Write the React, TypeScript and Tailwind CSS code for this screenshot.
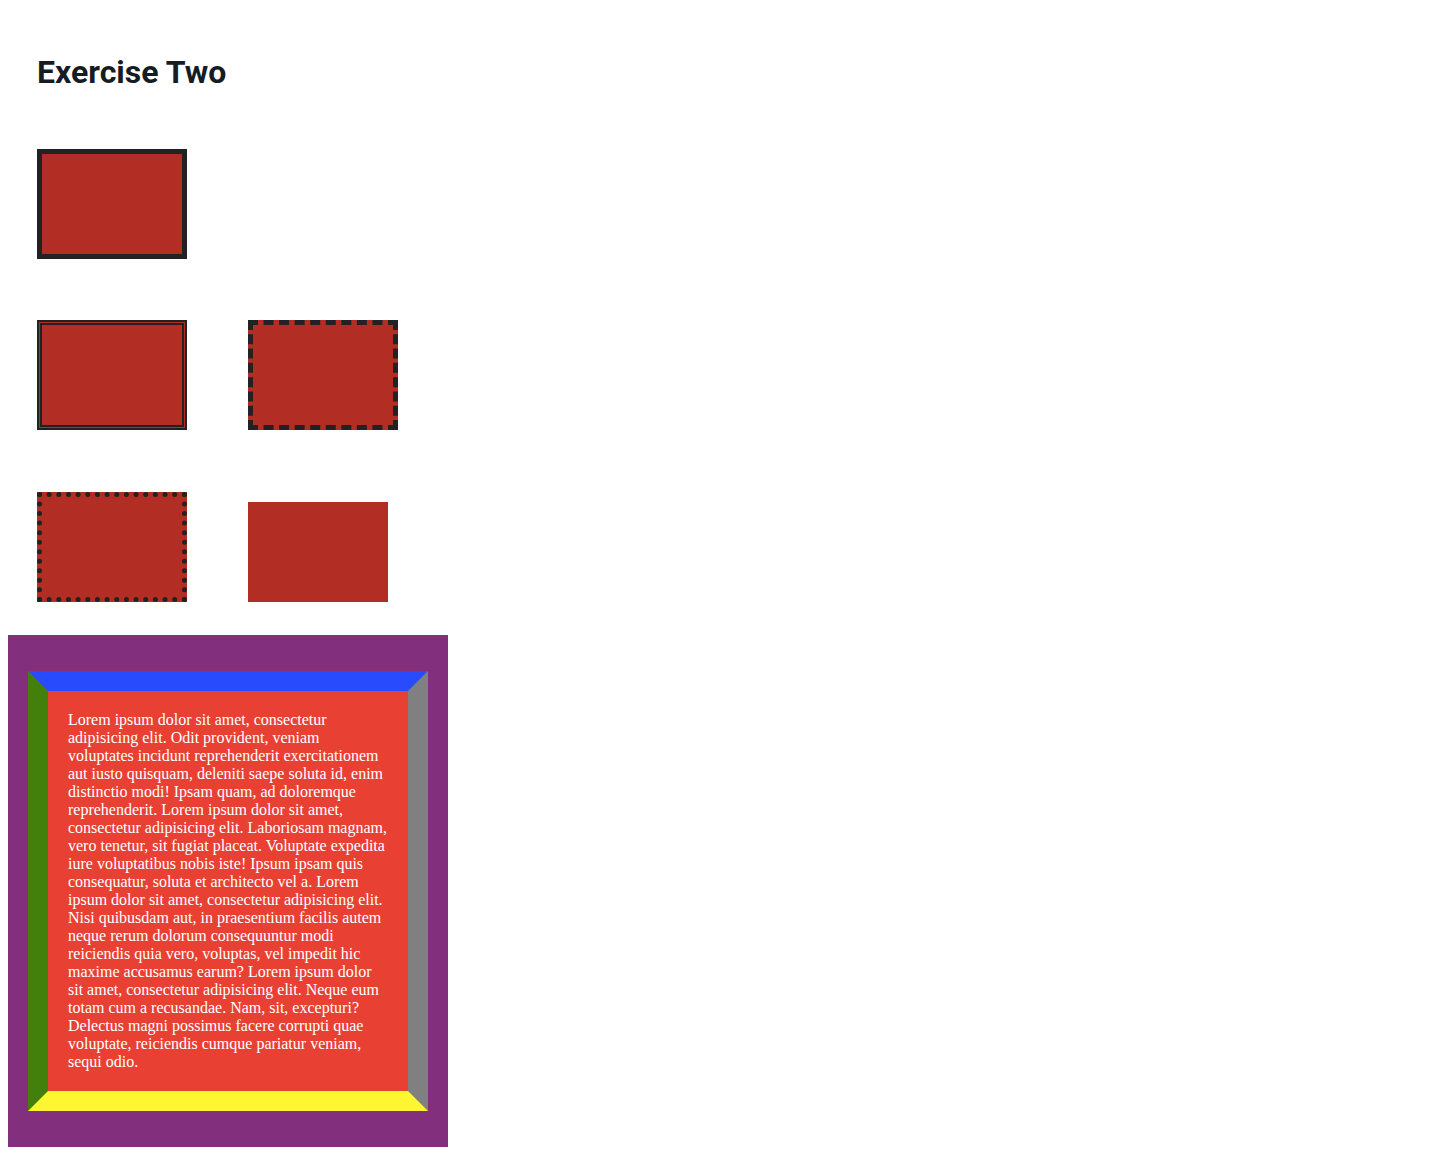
export default function App() {
  const box = "w-[150px] h-[110px] bg-[#b22d24] border-[5px] border-[#222222]";

  return (
    <div className="min-h-screen bg-white">
      <div className="pl-[37px] pt-[56px]">
        <h1 className="font-['Roboto',sans-serif] text-[32px] leading-none font-bold text-[#151c24]">
          Exercise Two
        </h1>

        <div className="mt-[61px] flex flex-col gap-[61px]">
          <div className="flex">
            <div className={`${box} border-solid`} />
          </div>
          <div className="flex gap-[61px]">
            <div className={`${box} border-double`} />
            <div className={`${box} border-dashed`} />
          </div>
          <div className="flex items-end gap-[61px] pt-px">
            <div className={`${box} border-dotted`} />
            <div className="w-[140px] h-[100px] bg-[#b22d24]" />
          </div>
        </div>
      </div>

      <div className="ml-2 mt-[33px] w-[440px] bg-[#822f7e] px-5 py-9">
        <div className="border-[20px] border-solid border-t-[#284bfe] border-r-[#808080] border-b-[#fdf631] border-l-[#427f0b] bg-[#e84033] p-5">
          <p className="font-['Liberation_Serif',serif] text-base leading-[18px] text-white">
            Lorem ipsum dolor sit amet, consectetur adipisicing elit. Odit
            provident, veniam voluptates incidunt reprehenderit exercitationem
            aut iusto quisquam, deleniti saepe soluta id, enim distinctio modi!
            Ipsam quam, ad doloremque reprehenderit. Lorem ipsum dolor sit amet,
            consectetur adipisicing elit. Laboriosam magnam, vero tenetur, sit
            fugiat placeat. Voluptate expedita iure voluptatibus nobis iste!
            Ipsum ipsam quis consequatur, soluta et architecto vel a. Lorem
            ipsum dolor sit amet, consectetur adipisicing elit. Nisi quibusdam
            aut, in praesentium facilis autem neque rerum dolorum consequuntur
            modi reiciendis quia vero, voluptas, vel impedit hic maxime
            accusamus earum? Lorem ipsum dolor sit amet, consectetur adipisicing
            elit. Neque eum totam cum a recusandae. Nam, sit, excepturi?
            Delectus magni possimus facere corrupti quae voluptate, reiciendis
            cumque pariatur veniam, sequi odio.
          </p>
        </div>
      </div>
    </div>
  );
}
